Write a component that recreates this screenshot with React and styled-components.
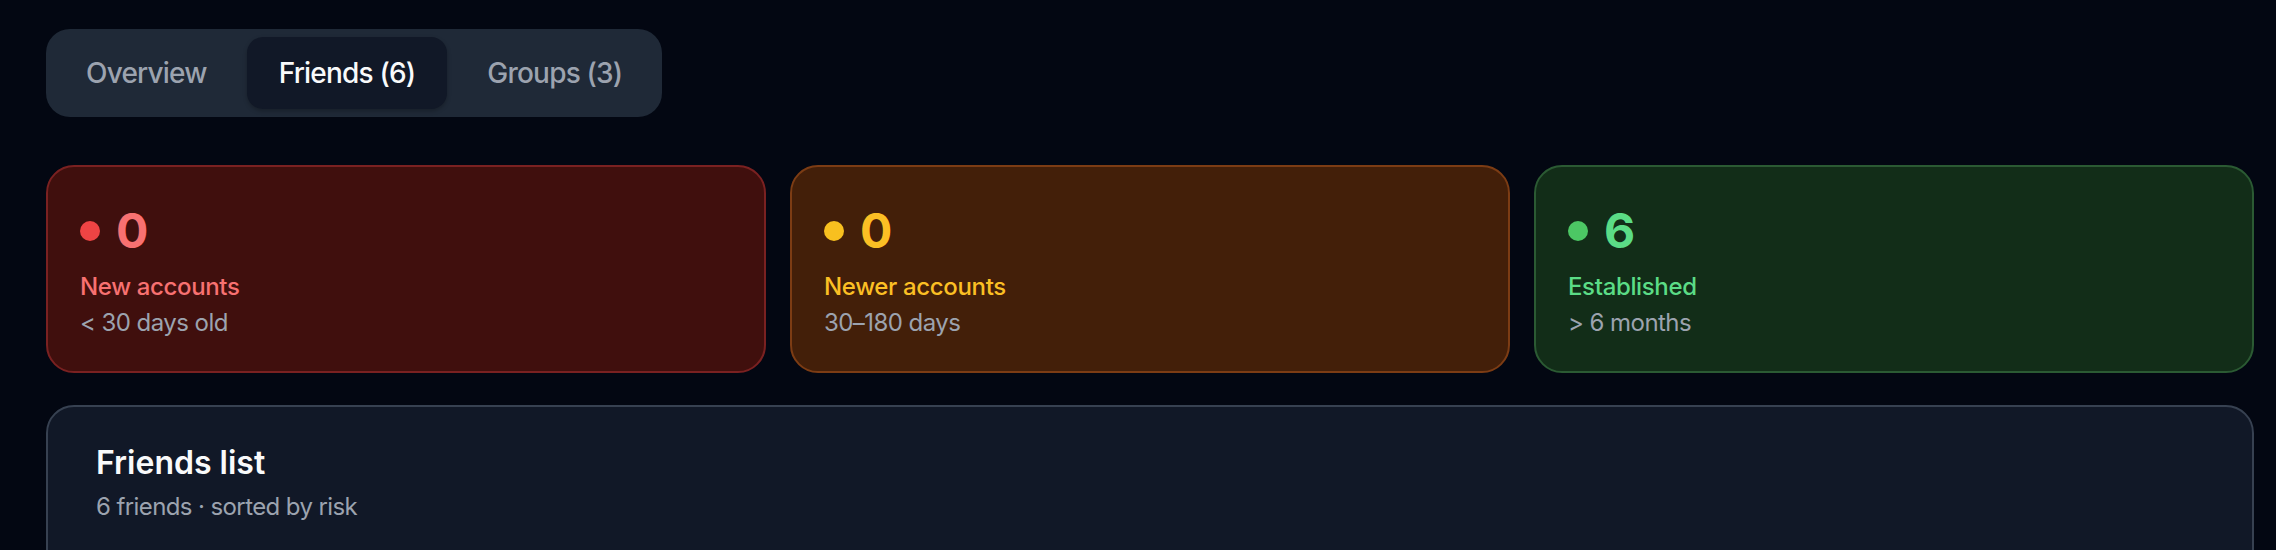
import React from "react";
import styled, { createGlobalStyle } from "styled-components";

const GlobalStyle = createGlobalStyle`
  html, body {
    margin: 0;
    padding: 0;
    background: #030712;
  }
  body {
    font-family: Inter, "Noto Sans", sans-serif;
    -webkit-font-smoothing: antialiased;
  }
`;

const tones = {
  red: { bg: "#400f0d", border: "#7a2121", dot: "#ef4444", text: "#f87171" },
  amber: { bg: "#431f09", border: "#7c3c14", dot: "#f8c01f", text: "#fbbf24" },
  green: { bg: "#122d18", border: "#2b5a33", dot: "#4cc764", text: "#5bdc86" },
};

const Page = styled.div`
  min-height: 550px;
  padding: 29px 22px 0 46px;
  box-sizing: border-box;
`;

const TabBar = styled.div`
  display: inline-flex;
  gap: 8px;
  padding: 8px;
  background: #1f2937;
  border-radius: 24px;
`;

const Tab = styled.button`
  border: 0;
  margin: 0;
  padding: 16px 32px;
  font-family: inherit;
  font-size: 28px;
  line-height: 40px;
  font-weight: 500;
  letter-spacing: -0.8px;
  border-radius: 16px;
  cursor: pointer;
  color: ${(p) => (p.$active ? "#f9fafb" : "#9ca3af")};
  background: ${(p) => (p.$active ? "#111827" : "transparent")};
  box-shadow: ${(p) => (p.$active ? "0 2px 4px rgba(0,0,0,0.25)" : "none")};
`;

const StatGrid = styled.div`
  display: grid;
  grid-template-columns: repeat(3, 1fr);
  gap: 24px;
  margin-top: 48px;
`;

const StatCard = styled.div`
  padding: 32px;
  border-radius: 28px;
  border: 2px solid ${(p) => tones[p.$tone].border};
  background: ${(p) => tones[p.$tone].bg};
`;

const StatTop = styled.div`
  display: flex;
  align-items: center;
  gap: 16px;
  height: 64px;
`;

const Dot = styled.span`
  width: 20px;
  height: 20px;
  border-radius: 50%;
  background: ${(p) => tones[p.$tone].dot};
`;

const Count = styled.span`
  font-size: 48px;
  line-height: 64px;
  font-weight: 700;
  color: ${(p) => tones[p.$tone].text};
`;

const StatLabel = styled.div`
  margin-top: 8px;
  font-size: 24px;
  line-height: 32px;
  font-weight: 500;
  letter-spacing: -0.35px;
  color: ${(p) => tones[p.$tone].text};
`;

const StatHint = styled.div`
  margin-top: 4px;
  font-size: 24px;
  line-height: 32px;
  letter-spacing: -0.55px;
  color: #9ca3af;
`;

const ListCard = styled.section`
  margin-top: 32px;
  padding: 32px 48px;
  min-height: 200px;
  border-radius: 28px;
  border: 2px solid #374151;
  background: #111827;
`;

const ListTitle = styled.h2`
  margin: 0;
  font-size: 32px;
  line-height: 48px;
  font-weight: 600;
  color: #f9fafb;
`;

const ListMeta = styled.p`
  margin: 4px 0 0;
  font-size: 24px;
  line-height: 32px;
  letter-spacing: -0.6px;
  color: #9ca3af;
`;

const stats = [
  { tone: "red", count: 0, label: "New accounts", hint: "< 30 days old" },
  { tone: "amber", count: 0, label: "Newer accounts", hint: "30–180 days" },
  { tone: "green", count: 6, label: "Established", hint: "> 6 months" },
];

export default function App() {
  return (
    <Page>
      <GlobalStyle />
      <TabBar>
        <Tab>Overview</Tab>
        <Tab $active>Friends (6)</Tab>
        <Tab>Groups (3)</Tab>
      </TabBar>

      <StatGrid>
        {stats.map((s) => (
          <StatCard key={s.label} $tone={s.tone}>
            <StatTop>
              <Dot $tone={s.tone} />
              <Count $tone={s.tone}>{s.count}</Count>
            </StatTop>
            <StatLabel $tone={s.tone}>{s.label}</StatLabel>
            <StatHint>{s.hint}</StatHint>
          </StatCard>
        ))}
      </StatGrid>

      <ListCard>
        <ListTitle>Friends list</ListTitle>
        <ListMeta>6 friends · sorted by risk</ListMeta>
      </ListCard>
    </Page>
  );
}
